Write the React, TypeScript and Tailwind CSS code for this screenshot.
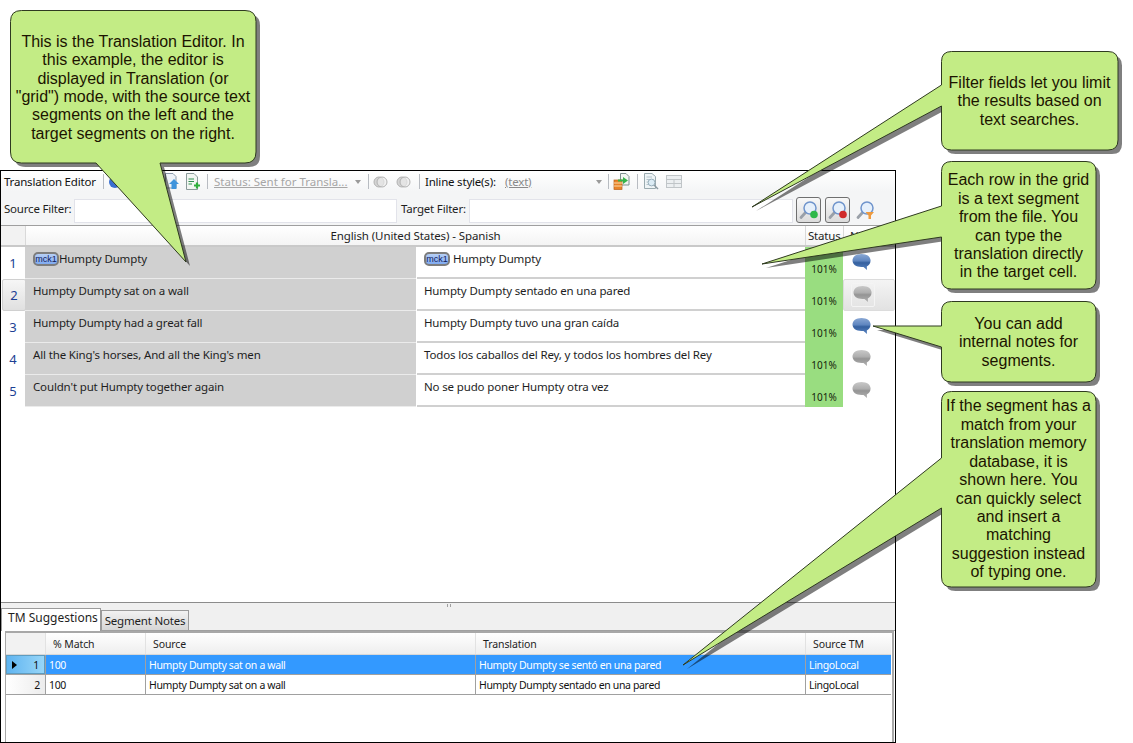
import React from "react";

const GREEN = "#c3ec85";

function bubblePath(x: number, y: number, r: number, b: number, rad: number, tail?: { side: "left" | "bottom"; a: number; c: number; tx: number; ty: number }) {
  let d = `M${x + rad} ${y} H${r - rad} Q${r} ${y} ${r} ${y + rad} V${b - rad} Q${r} ${b} ${r - rad} ${b}`;
  if (tail && tail.side === "bottom") d += ` H${tail.c} L${tail.tx} ${tail.ty} L${tail.a} ${b}`;
  d += ` H${x + rad} Q${x} ${b} ${x} ${b - rad}`;
  if (tail && tail.side === "left") d += ` V${tail.c} L${tail.tx} ${tail.ty} L${x} ${tail.a}`;
  d += ` V${y + rad} Q${x} ${y} ${x + rad} ${y} Z`;
  return d;
}

const bubbles = [
  bubblePath(10.5, 10.5, 256, 163, 11, { side: "bottom", a: 96, c: 160, tx: 186, ty: 262 }),
  bubblePath(941.5, 51.5, 1118, 150, 10, { side: "left", a: 85, c: 106, tx: 752, ty: 207 }),
  bubblePath(941.5, 161.5, 1096, 289, 10, { side: "left", a: 206, c: 237, tx: 762, ty: 264 }),
  bubblePath(941.5, 301.5, 1096, 382, 10, { side: "left", a: 326, c: 347, tx: 873, ty: 326 }),
  bubblePath(941.5, 391.5, 1096, 587, 10, { side: "left", a: 458, c: 508, tx: 683, ty: 665 }),
];

function Chat({ blue }: { blue?: boolean }) {
  const id = blue ? "chatB" : "chatG";
  return (
    <svg width="20" height="20" viewBox="0 0 20 20">
      <defs>
        <linearGradient id={id} x1="0" y1="0" x2="0" y2="1">
          <stop offset="0" stopColor={blue ? "#8aa8d4" : "#c8c8c8"} />
          <stop offset="0.42" stopColor={blue ? "#5f86c0" : "#aeaeae"} />
          <stop offset="0.55" stopColor={blue ? "#34609f" : "#949494"} />
          <stop offset="1" stopColor={blue ? "#5b85c2" : "#b2b2b2"} />
        </linearGradient>
      </defs>
      <path d="M9.5 1C15 1 18.6 3.8 18.6 7.5C18.6 10.5 16.8 12.6 14.8 13.4L15 17L11.5 14H9.5C4 14 .5 11.2 .5 7.5C.5 3.8 4 1 9.5 1Z" fill={`url(#${id})`} />
    </svg>
  );
}

function Lens({ dot, tiny }: { dot: string; tiny?: boolean }) {
  return (
    <svg width="20" height="20" viewBox="0 0 20 20">
      <path d="M7 12L2 17.5" stroke="#9aa0a8" strokeWidth="2.8" strokeLinecap="round" />
      <circle cx="11" cy="8" r="6" fill="#e6f0fb" stroke="#6f94cc" strokeWidth="1.5" />
      {tiny ? (
        <path d="M9.5 12H18L15 15.5V19H12.5V15.5Z" fill="#ee9a3e" />
      ) : (
        <circle cx="15" cy="14.5" r="3.8" fill={dot} />
      )}
    </svg>
  );
}

function Sep() {
  return <div className="w-px h-[15px] bg-[#b8bcc2]" />;
}

function Arrow() {
  return <div className="w-0 h-0 border-x-[3px] border-x-transparent border-t-[4px] border-t-[#9a9a9a]" />;
}

function DocPlus() {
  return (
    <svg width="15" height="17" viewBox="0 0 15 17">
      <path d="M1.5 .5H9L12.5 4V16.5H1.5Z" fill="#f2f6f2" stroke="#8b9a9a" />
      <path d="M3.5 6H9M3.5 8.5H9M3.5 11H7" stroke="#2f8f4f" strokeWidth="1.2" />
      <path d="M9 12.5H15M12 9.5V15.5" stroke="#2fae3c" strokeWidth="2.2" />
    </svg>
  );
}

function DocArrow() {
  return (
    <svg width="17" height="17" viewBox="0 0 17 17">
      <path d="M2.5 .5H10L13 3.5V15H2.5Z" fill="#eef3f8" stroke="#8b9aaa" />
      <path d="M11 6L16 11H13.5V16H8.5V11H6Z" fill="#3f94dc" />
    </svg>
  );
}

function Exporter() {
  return (
    <svg width="17" height="17" viewBox="0 0 17 17">
      <path d="M7.5 .5H13L16 3.5V12H7.5Z" fill="#f2f6f2" stroke="#7f9090" />
      <rect x="1" y="7" width="8" height="9.5" fill="#e8842b" stroke="#b9601a" strokeWidth=".7" />
      <path d="M1 10H9M1 13H9" stroke="#fbd9a8" />
      <path d="M5 6.5H10V4L15 7.5L10 11V8.5H5Z" fill="#37b44a" />
    </svg>
  );
}

function DocFind() {
  return (
    <svg width="15" height="17" viewBox="0 0 15 17">
      <path d="M.5 .5H8L11.5 3.5V15.5H.5Z" fill="#eef4f6" stroke="#9aaaaf" />
      <path d="M2.5 4H8M2.5 6.5H8M2.5 9H8M2.5 11.5H8" stroke="#b4c4cc" />
      <circle cx="7.5" cy="9.5" r="3.4" fill="#dcecf5" stroke="#9ab0bc" />
      <path d="M10 12L14 16" stroke="#8c9aa2" strokeWidth="1.5" />
    </svg>
  );
}

function GridIcon() {
  return (
    <svg width="16" height="13" viewBox="0 0 16 13">
      <rect x=".5" y=".5" width="15" height="12" fill="#eceff1" stroke="#c0c5c8" />
      <path d="M.5 4.5H15.5M8 4.5V12.5M.5 8.5H15.5" stroke="#c0c5c8" />
    </svg>
  );
}

function Ring() {
  return (
    <svg width="15" height="12" viewBox="0 0 15 12">
      <circle cx="6" cy="6" r="5" fill="#d4d4d4" stroke="#b2b2b2" />
      <circle cx="9" cy="6" r="5" fill="#ececec" fillOpacity=".65" stroke="#b2b2b2" />
    </svg>
  );
}

function Tag() {
  return (
    <span className="flex items-center justify-center w-[26px] h-[14px] mt-[2px] shrink-0 rounded-[5px] border-2 border-[#7d7d7d] bg-gradient-to-b from-[#b6cff6] to-[#7faaf0] text-[9px] leading-none tracking-normal text-[#10205a] font-['Liberation_Sans',sans-serif]">
      mck1
    </span>
  );
}

const rows = [
  ["Humpty Dumpty", "Humpty Dumpty"],
  ["Humpty Dumpty sat on a wall", "Humpty Dumpty sentado en una pared"],
  ["Humpty Dumpty had a great fall", "Humpty Dumpty tuvo una gran caída"],
  ["All the King's horses, And all the King's men", "Todos los caballos del Rey, y todos los hombres del Rey"],
  ["Couldn't put Humpty together again", "No se pudo poner Humpty otra vez"],
];

function Callout({ className, children }: { className: string; children: React.ReactNode }) {
  return (
    <div className={`absolute flex items-center justify-center text-center text-[16px] leading-[18.4px] text-[#1c1400] font-['Liberation_Sans',sans-serif] ${className}`}>
      <div>{children}</div>
    </div>
  );
}

export default function App() {
  return (
    <div className="relative w-[1133px] h-[743px] bg-white overflow-hidden font-['Noto_Sans',sans-serif] text-[11.5px] tracking-[-0.2px] text-[#1e1e1e]">
      <div className="mt-[170px] w-[896px] h-[573px] border border-black flex flex-col">
        {/* toolbar */}
        <div className="h-[21px] flex items-center bg-gradient-to-b from-white to-[#f4f5f6] shrink-0">
          <span className="ml-[3px] w-[99px] text-[#111]">Translation Editor</span>
          <Sep />
          <div className="ml-[5px] w-[12px] h-[12px] rounded-full bg-[#3a6fd0]" />
          <div className="ml-[42px]"><DocArrow /></div>
          <div className="ml-[5px]"><DocPlus /></div>
          <div className="ml-[7px]"><Sep /></div>
          <span className="ml-[6px] w-[136px] whitespace-nowrap tracking-normal text-[#a6a6a6] underline">Status: Sent for Transla...</span>
          <div className="ml-[5px]"><Arrow /></div>
          <div className="ml-[7px]"><Sep /></div>
          <div className="ml-[4px]"><Ring /></div>
          <div className="ml-[8px]"><Ring /></div>
          <div className="ml-[8px]"><Sep /></div>
          <span className="ml-[5px] w-[75px] whitespace-nowrap text-[#111]">Inline style(s):</span>
          <span className="ml-[5px] w-[91px] text-[#8a8a8a] underline">(text)</span>
          <Arrow />
          <div className="ml-[6px]"><Sep /></div>
          <div className="ml-[4px]"><Exporter /></div>
          <div className="ml-[7px]"><Sep /></div>
          <div className="ml-[6px]"><DocFind /></div>
          <div className="ml-[7px]"><GridIcon /></div>
        </div>
        {/* filter row */}
        <div className="h-[33px] flex items-center bg-[#f4f5f6] shrink-0 pt-[4px]">
          <span className="ml-[3px] w-[70px] mb-[3px] whitespace-nowrap">Source Filter:</span>
          <div className="w-[323px] h-[24px] bg-white border border-[#e2e3ea]" />
          <span className="ml-[4px] w-[68px] mb-[3px] whitespace-nowrap">Target Filter:</span>
          <div className="w-[324px] h-[24px] bg-white border border-[#e2e3ea]" />
          <div className="ml-[3px] mb-[2px] w-[25px] h-[26px] rounded-[3px] border border-[#6f6f6f] bg-gradient-to-b from-[#f8f8f8] to-[#dcdcdc] flex items-center justify-center"><Lens dot="#2fb84a" /></div>
          <div className="ml-[4px] mb-[2px] w-[25px] h-[26px] rounded-[3px] border border-[#6f6f6f] bg-gradient-to-b from-[#f8f8f8] to-[#dcdcdc] flex items-center justify-center"><Lens dot="#d02a2a" /></div>
          <div className="ml-[6px] mb-[2px]"><Lens dot="" tiny /></div>
        </div>
        {/* header */}
        <div className="h-[22px] flex shrink-0 border-t border-[#9f9f9f] border-b-2 border-b-[#c9c9c9]">
          <div className="w-[24px] bg-[#f2f2f2]" />
          <div className="w-[780px] bg-gradient-to-b from-white to-[#f4f4f4] border-l border-[#d9d9d9] text-center tracking-[-0.1px] leading-[20px]">English (United States) - Spanish</div>
          <div className="w-[38px] bg-gradient-to-b from-white to-[#f4f4f4] border-l border-[#d9d9d9] pl-[2px] leading-[20px]">Status</div>
          <div className="flex-1 bg-gradient-to-b from-white to-[#f4f4f4] border-l border-[#d9d9d9] pl-[6px] leading-[20px]">Notes</div>
        </div>
        {/* rows */}
        <div className="shrink-0">
          {rows.map((r, i) => (
            <div key={i} className="h-[32px] flex">
              <div className={`w-[24px] flex items-center justify-center pt-[1px] text-[13px] tracking-normal text-[#1c3f94] ${i === 1 ? "ml-[1px] mr-[-1px] rounded-[2px] border border-[#d0d0d0] bg-gradient-to-b from-[#f6f6f6] to-[#e0e0e0]" : ""}`}>
                {i + 1}
              </div>
              <div className="w-[391px] bg-[#d0d0d0] border-b border-[#ebebeb] pl-[8px] pt-[3px] leading-[18px] tracking-[-0.15px] flex items-start">
                {i === 0 ? <Tag /> : null}
                <span>{r[0]}</span>
              </div>
              <div className="w-[388px] ml-[1px] border-b-2 border-[#d0d0d0] pl-[7px] pt-[3px] leading-[18px] tracking-[-0.15px] flex items-start">
                {i === 0 ? <span className="mr-[3px]"><Tag /></span> : null}
                <span>{r[1]}</span>
              </div>
              <div className="w-[38px] bg-[#99dd80] flex items-end justify-center pb-[3px] text-[10px] leading-[14px] tracking-normal text-[#16240c]">101%</div>
              <div className={`flex-1 flex items-center pl-[7px] ${i === 1 ? "bg-gradient-to-b from-[#f4f4f4] to-[#e2e2e2] border border-[#dcdcdc] rounded-[2px]" : ""}`}>
                <div className={i === 1 ? "w-[24px] h-[24px] border border-[#f4f4f4] rounded-[2px] flex items-center justify-center" : "w-[24px] flex items-center justify-center"}>
                  <Chat blue={i === 0 || i === 2} />
                </div>
              </div>
            </div>
          ))}
        </div>
        <div className="flex-1" />
        {/* bottom panel */}
        <div className="h-[140px] shrink-0 border-t border-[#8c8c8c] bg-[#f0f0f0] flex flex-col">
          <div className="h-[27px] relative flex items-end shrink-0">
            <div className="absolute left-[446px] top-[1px] w-[4px] h-[3px] border-x border-[#a0a0a0]" />
            <div className="w-[100px] h-[23px] bg-white border border-b-0 border-[#9a9a9a] pl-[6px] text-[12px] tracking-normal leading-[18px] -mb-px z-10 whitespace-nowrap">TM Suggestions</div>
            <div className="w-[88px] h-[20px] border border-b-0 border-[#9a9a9a] bg-gradient-to-b from-[#f2f2f2] to-[#d6d6d6] text-center text-[11.5px] leading-[19px] whitespace-nowrap">Segment Notes</div>
          </div>
          <div className="flex-1 bg-white border-t border-[#a0a0a0] pl-[4px] min-h-0">
            <div className="h-full w-[889px] border-l border-r-2 border-t-2 border-[#a8a8a8] pr-[1px] text-[10.5px] tracking-[-0.35px] leading-[14px]">
              <div className="w-[885px] h-[22px] flex bg-gradient-to-b from-white to-[#eeeeee] border-b border-[#d8d8d8] items-center tracking-[-0.1px]">
                <div className="w-[39px] h-full bg-[#f2f2f2]" />
                <div className="w-[100px] h-full flex items-center border-l border-[#e2e2e2] pl-[7px]">% Match</div>
                <div className="w-[330px] h-full flex items-center border-l border-[#e2e2e2] pl-[7px]">Source</div>
                <div className="w-[330px] h-full flex items-center border-l border-[#e2e2e2] pl-[7px]">Translation</div>
                <div className="flex-1 h-full flex items-center border-l border-[#e2e2e2] pl-[7px]">Source TM</div>
              </div>
              {[
                ["100", "Humpty Dumpty sat on a wall", "Humpty Dumpty se sentó en una pared", "LingoLocal"],
                ["100", "Humpty Dumpty sat on a wall", "Humpty Dumpty sentado en una pared", "LingoLocal"],
              ].map((r, i) => (
                <div key={i} className={`w-[885px] h-[20px] flex border-b border-[#a0a0a0] ${i === 0 ? "bg-[#3399ff] text-white" : "bg-white text-[#111]"}`}>
                  <div className={`w-[39px] h-full flex items-center justify-end pr-[5px] text-[#111] relative ${i === 0 ? "bg-gradient-to-r from-[#5fb4f0] to-[#97d6f8] border border-[#5d9cc0]" : "bg-gradient-to-r from-white to-[#ececec]"}`}>
                    {i === 0 ? <div className="absolute left-[5px] top-[5px] w-0 h-0 border-y-[4px] border-y-transparent border-l-[5px] border-l-black" /> : null}
                    {i + 1}
                  </div>
                  <div className="w-[100px] h-full flex items-center border-l border-[#a0a0a0] pl-[3px]">{r[0]}</div>
                  <div className="w-[330px] h-full flex items-center border-l border-[#a0a0a0] pl-[3px]">{r[1]}</div>
                  <div className="w-[330px] h-full flex items-center border-l border-[#a0a0a0] pl-[3px]">{r[2]}</div>
                  <div className="flex-1 h-full flex items-center border-l border-[#a0a0a0] pl-[3px]">{r[3]}</div>
                </div>
              ))}
            </div>
          </div>
        </div>
      </div>

      {/* callouts */}
      <svg className="absolute inset-0" width="1133" height="743" viewBox="0 0 1133 743">
        {bubbles.map((d, i) => (
          <path key={i} d={d} fill="#000" fillOpacity=".5" transform="translate(4 4)" />
        ))}
        {bubbles.map((d, i) => (
          <path key={i} d={d} fill={GREEN} stroke="#2f3a20" strokeWidth="1" />
        ))}
      </svg>
      <Callout className="left-[10px] top-[10px] w-[246px] h-[153px] pt-[3px] tracking-normal">
        This is the Translation Editor. In<br />this example, the editor is<br />displayed in Translation (or<br />"grid") mode, with the source text<br />segments on the left and the<br />target segments on the right.
      </Callout>
      <Callout className="left-[941px] top-[51px] w-[177px] h-[99px] pt-[2px] tracking-normal">
        Filter fields let you limit<br />the results based on<br />text searches.
      </Callout>
      <Callout className="left-[941px] top-[161px] w-[155px] h-[128px] pt-[3px] tracking-normal">
        Each row in the grid<br />is a text segment<br />from the file. You<br />can type the<br />translation directly<br />in the target cell.
      </Callout>
      <Callout className="left-[941px] top-[301px] w-[155px] h-[81px] pt-[2px] tracking-normal">
        You can add<br />internal notes for<br />segments.
      </Callout>
      <Callout className="left-[941px] top-[391px] w-[155px] h-[196px] pt-[1px] tracking-normal">
        If the segment has a<br />match from your<br />translation memory<br />database, it is<br />shown here. You<br />can quickly select<br />and insert a<br />matching<br />suggestion instead<br />of typing one.
      </Callout>
    </div>
  );
}
